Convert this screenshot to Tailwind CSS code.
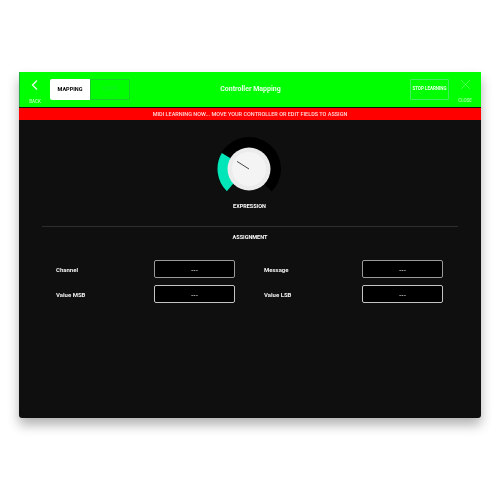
<!DOCTYPE html>
<html>
<head>
<meta charset="utf-8">
<script src="https://cdn.jsdelivr.net/npm/@tailwindcss/browser@4"></script>
</head>
<body class="bg-white">
<div class="w-[500px] h-[500px] overflow-hidden bg-white pt-[72px] pl-[19px] font-['Roboto','Liberation_Sans',sans-serif] antialiased blur-[0.35px]">
  <div class="w-[462px] h-[346px] bg-[#0f0f0f] rounded-b-[3px] flex flex-col shadow-[0_7px_12px_rgba(0,0,0,0.3)]">
    <header class="h-[35px] bg-[#00ff00] flex items-center shrink-0 border-l border-[#20b040]">
      <div class="w-[110px] h-full flex items-center shrink-0">
        <div class="w-[30px] h-full flex flex-col items-center pt-[7px] shrink-0">
          <svg width="10" height="12" viewBox="0 0 10 12" fill="none" stroke="#e8ffe8" stroke-width="1.4"><path d="M7 1.5 L2.5 6 L7 10.5"/></svg>
          <span class="text-[4.5px] font-medium leading-[5px] mt-[8px] text-[#c0ffc0]">BACK</span>
        </div>
        <div class="flex h-[21px] mt-[-1px]">
          <div class="w-[40px] bg-white rounded-l-[2px] flex items-center justify-center text-[5.5px] font-bold text-black">MAPPING</div>
          <div class="w-[40px] border border-[#18d028] rounded-r-[2px] flex items-center justify-center text-[5px] font-bold text-[#10f020]">LEARN</div>
        </div>
      </div>
      <div class="flex-1 text-center text-[7px] font-bold text-[#e8ffe8] mt-[-1px]">Controller Mapping</div>
      <div class="w-[110px] h-full flex items-center justify-end shrink-0">
        <div class="w-[39px] h-[21px] mt-[-1px] border border-[#40f060] rounded-[1px] flex items-center justify-center text-[4.5px] font-bold text-[#e8ffe8] whitespace-nowrap">STOP LEARNING</div>
        <div class="w-[32px] h-full flex flex-col items-center pt-[7px] shrink-0">
          <svg width="11" height="11" viewBox="0 0 11 11" fill="none" stroke="#60ff60" stroke-width="0.8"><path d="M1 1 L10 10 M10 1 L1 10"/></svg>
          <span class="text-[4.5px] font-medium leading-[5px] mt-[8px] text-[#a8ffa8]">CLOSE</span>
        </div>
      </div>
    </header>
    <div class="h-[12px] mt-[1px] bg-[#ff0000] shrink-0 flex items-center justify-center text-[5.5px] font-medium text-[#ffd8d8] whitespace-nowrap">MIDI LEARNING NOW... MOVE YOUR CONTROLLER OR EDIT FIELDS TO ASSIGN</div>
    <main class="flex-1 flex flex-col items-center">
      <svg class="mt-[16px] ml-[-2px] shrink-0" width="66" height="66" viewBox="0 0 66 66">
        <path d="M10.4 55.6 A32 32 0 1 1 55.6 55.6 L40 40 A10 10 0 1 0 26 40 Z" fill="#000"/>
        <path d="M10.8 55.2 A31.4 31.4 0 0 1 5.8 17 L24 28 L24 40 Z" fill="#00e6b8"/>
        <circle cx="33" cy="33" r="21.5" fill="#ececec"/>
        <circle cx="33" cy="33" r="17" fill="#f4f4f4"/>
        <path d="M21 25.4 L33 33" stroke="#333" stroke-width="0.9"/>
      </svg>
      <div class="text-[5.5px] font-bold text-white leading-[8px] ml-[-1px]">EXPRESSION</div>
      <div class="w-[416px] h-px bg-[#2e2e2e] mt-[16px]"></div>
      <div class="text-[5.5px] font-bold text-white mt-[6px] leading-[8px]">ASSIGNMENT</div>
      <div class="w-[388px] mt-[19px] grid grid-cols-[98px_81px_29px_98px_81px] gap-y-[7px] items-center text-[6px] font-bold text-[#f0f0f0]">
        <div>Channel</div>
        <div class="h-[18px] bg-black border border-[#9a9a9a] rounded-[2px] flex items-center justify-center">---</div>
        <div></div>
        <div>Message</div>
        <div class="h-[18px] bg-black border border-[#9a9a9a] rounded-[2px] flex items-center justify-center">---</div>
        <div>Value MSB</div>
        <div class="h-[18px] bg-black border border-[#c4c4c4] rounded-[2px] flex items-center justify-center">---</div>
        <div></div>
        <div>Value LSB</div>
        <div class="h-[18px] bg-black border border-[#c4c4c4] rounded-[2px] flex items-center justify-center">---</div>
      </div>
    </main>
  </div>
</div>
</body>
</html>
